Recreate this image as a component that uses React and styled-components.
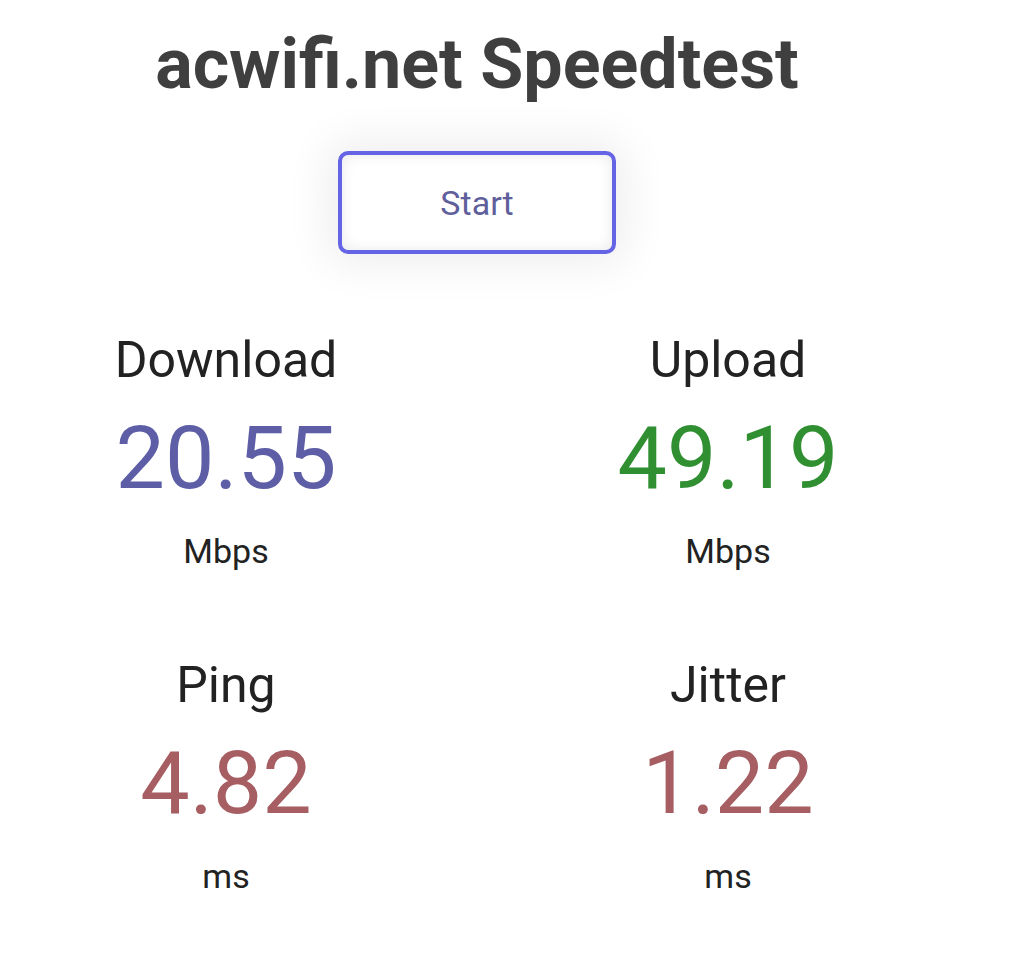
import React from 'react'
import styled, { createGlobalStyle } from 'styled-components'

const GlobalStyle = createGlobalStyle`
    body {
        margin: 0;
        background: #ffffff;
        font-family: Roboto, "Liberation Sans", sans-serif;
    }
`

const Page = styled.div`
    width: 954px;
    display: flex;
    flex-direction: column;
    align-items: center;
    padding-top: 29px;
`

const Title = styled.h1`
    margin: 0;
    font-size: 70px;
    line-height: 1;
    font-weight: 700;
    color: #3f3f3f;
`

const StartButton = styled.button`
    margin-top: 52px;
    width: 278px;
    height: 103px;
    box-sizing: border-box;
    border: 4px solid #6464e4;
    border-radius: 10px;
    background: #ffffff;
    color: #5f5f9c;
    font-family: Roboto, "Liberation Sans", sans-serif;
    font-size: 34px;
    cursor: pointer;
    box-shadow: 0 0 45px 10px rgba(0, 0, 0, 0.07), inset 0 0 14px rgba(0, 0, 0, 0.09);
`

const Grid = styled.div`
    margin-top: 81px;
    display: grid;
    grid-template-columns: 400px 400px;
    column-gap: 102px;
    row-gap: 92px;
`

const Meter = styled.div`
    display: flex;
    flex-direction: column;
    align-items: center;
`

const Label = styled.div`
    font-size: 50px;
    line-height: 1;
    color: #222222;
`

const Value = styled.div`
    margin-top: 29px;
    font-size: 88px;
    line-height: 1;
    color: ${(p) => p.$color};
`

const Unit = styled.div`
    margin-top: 32px;
    font-size: 34px;
    line-height: 1;
    color: #222222;
`

const meters = [
    { label: 'Download', value: '20.55', unit: 'Mbps', color: '#5d5ea6' },
    { label: 'Upload', value: '49.19', unit: 'Mbps', color: '#2f8f31' },
    { label: 'Ping', value: '4.82', unit: 'ms', color: '#a65e62' },
    { label: 'Jitter', value: '1.22', unit: 'ms', color: '#a65e62' },
]

const App = () => {
    return (
        <>
            <GlobalStyle />
            <Page>
                <Title>acwifi.net Speedtest</Title>
                <StartButton>Start</StartButton>
                <Grid>
                    {meters.map((m) => (
                        <Meter key={m.label}>
                            <Label>{m.label}</Label>
                            <Value $color={m.color}>{m.value}</Value>
                            <Unit>{m.unit}</Unit>
                        </Meter>
                    ))}
                </Grid>
            </Page>
        </>
    )
}

export default App
